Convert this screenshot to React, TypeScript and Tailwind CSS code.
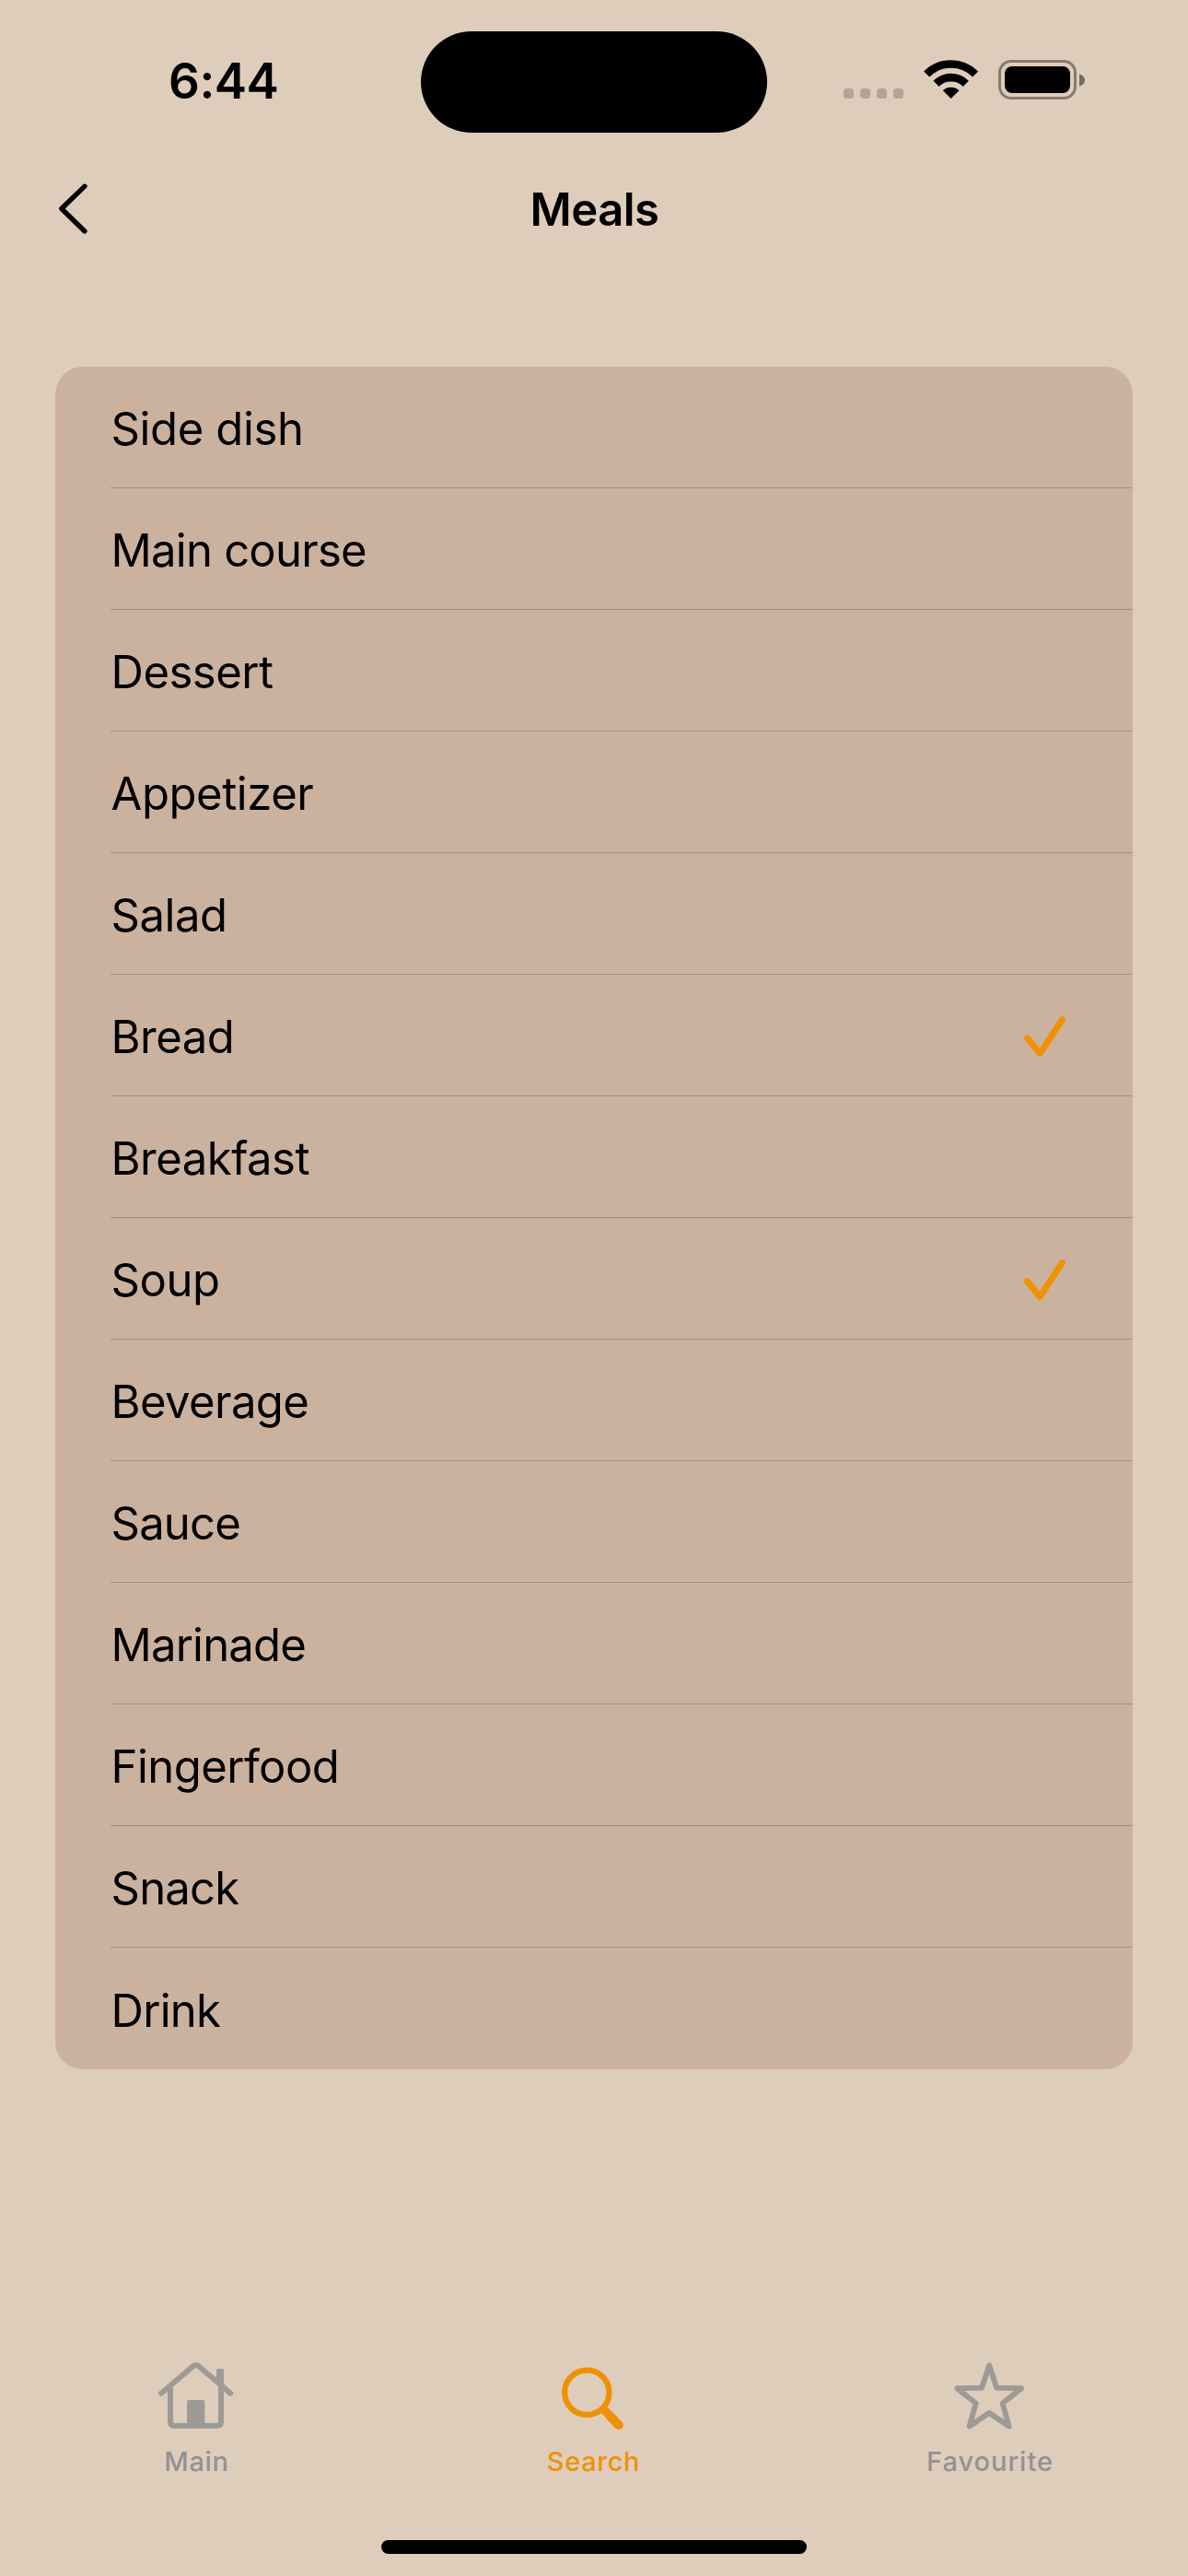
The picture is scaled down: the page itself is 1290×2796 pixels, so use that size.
import React from "react";

type Meal = { name: string; tracking: string; checked?: boolean };

const meals: Meal[] = [
  { name: "Side dish", tracking: "tracking-[-0.36px]" },
  { name: "Main course", tracking: "tracking-[-0.75px]" },
  { name: "Dessert", tracking: "tracking-[-0.48px]" },
  { name: "Appetizer", tracking: "tracking-[-0.42px]" },
  { name: "Salad", tracking: "tracking-[-0.45px]" },
  { name: "Bread", tracking: "tracking-[-0.53px]", checked: true },
  { name: "Breakfast", tracking: "tracking-[-0.5px]" },
  { name: "Soup", tracking: "tracking-[-0.43px]", checked: true },
  { name: "Beverage", tracking: "tracking-[-0.57px]" },
  { name: "Sauce", tracking: "tracking-[-0.8px]" },
  { name: "Marinade", tracking: "tracking-[-0.8px]" },
  { name: "Fingerfood", tracking: "tracking-[-0.53px]" },
  { name: "Snack", tracking: "tracking-[-0.8px]" },
  { name: "Drink", tracking: "tracking-[-0.7px]" },
];

function StatusBar() {
  return (
    <div className="flex h-[160px] shrink-0 items-start">
      <div className="mt-[58px] ml-[183px] w-[274px] text-[53px] leading-[60px] font-semibold tracking-[-0.5px]">
        6:44
      </div>
      <div className="mt-[34px] h-[110px] w-[376px] rounded-full bg-black" />
      <div className="mt-[96px] ml-[83px] flex gap-[7px]">
        {[0, 1, 2, 3].map((i) => (
          <span key={i} className="size-[11px] rounded-[3.5px] bg-[#b2a496]" />
        ))}
      </div>
      <svg className="mt-[64px] ml-[22px] h-[44px] w-[60px]" viewBox="369 102 180 132" fill="none">
        <path d="M378.5 151.5A112.5 112.5 0 0 1 537.5 151.5" stroke="#000" strokeWidth="26" />
        <path d="M409.6 182.6A68.5 68.5 0 0 1 506.4 182.6" stroke="#000" strokeWidth="26" />
        <path d="M458 231L431.5 204.5A39 39 0 0 1 484.5 204.5Z" fill="#000" />
      </svg>
      <div className="mt-[65px] ml-[21px] flex items-center gap-[3px]">
        <div className="h-[43px] w-[85px] rounded-[14px] border-[3px] border-[#867b71] p-1">
          <div className="h-full w-full rounded-[8px] bg-black" />
        </div>
        <svg className="h-[14px] w-[6px]" viewBox="0 0 6 14">
          <path d="M0 0.5C3.6 1.5 6 4 6 7S3.6 12.5 0 13.5Z" fill="#756b62" />
        </svg>
      </div>
    </div>
  );
}

function NavBar() {
  return (
    <header className="grid h-[132px] shrink-0 grid-cols-3 items-center">
      <svg className="ml-[60px] h-[60px] w-[40px]" viewBox="60 196 40 60" fill="none">
        <path
          d="M92 202.2L66.8 226.5L92 251"
          stroke="#000"
          strokeWidth="5.3"
          strokeLinecap="round"
          strokeLinejoin="round"
        />
      </svg>
      <h1 className="pt-[3px] pl-px text-center text-[49px] leading-[60px] font-semibold tracking-[-0.5px]">Meals</h1>
    </header>
  );
}

function CheckMark() {
  return (
    <svg className="mt-[3px] mr-[72px] h-[46px] w-[46px]" viewBox="1112 1102 46 46" fill="none">
      <path
        d="M1115.4 1126.7L1129.3 1143.4L1153.4 1106.7"
        stroke="#ee9204"
        strokeWidth="7"
        strokeLinecap="round"
        strokeLinejoin="round"
      />
    </svg>
  );
}

function MealList() {
  return (
    <ul className="mx-[60px] mt-[106px] shrink-0 overflow-hidden rounded-[30px] bg-[#cbb29e] pl-[60px]">
      {meals.map((meal, i) => (
        <li
          key={meal.name}
          className={
            i < meals.length - 1
              ? "flex h-[132px] items-center justify-between border-b border-[#a38f82]"
              : "flex h-[132px] items-center justify-between"
          }
        >
          <span className={`pt-[5px] pl-[0.5px] text-[49px] leading-[60px] ${meal.tracking}`}>{meal.name}</span>
          {meal.checked && <CheckMark />}
        </li>
      ))}
    </ul>
  );
}

function TabBar() {
  return (
    <nav className="mt-[316px] grid grid-cols-[426px_434px_430px] text-[29px] leading-[36px] font-medium text-[#929292]">
      <div className="flex flex-col items-center">
        <svg className="h-[76px] w-[84px]" viewBox="93 66 252 228" fill="none">
          <g stroke="#9e9b96" strokeWidth="18" strokeLinecap="round" strokeLinejoin="round">
            <path d="M105 173L210 84Q218 78 226 84L331 173" />
            <path d="M135 150V265Q135 279 149 279H286Q300 279 300 265V150" />
          </g>
          <path d="M285 138V98Q285 93 290 93H304Q309 93 309 98V160Z" fill="#9e9b96" />
          <path d="M189 275V201Q189 195 195 195H241Q247 195 247 201V275Z" fill="#9e9b96" />
        </svg>
        <span className="mt-[16px] pl-[1px] tracking-[0.7px]">Main</span>
      </div>
      <div className="flex flex-col items-center text-[#ee9204]">
        <svg className="h-[76px] w-[84px]" viewBox="93 66 252 228" fill="none" stroke="#ee9204">
          <circle cx="202" cy="170.5" r="72.5" strokeWidth="19" />
          <path d="M259 228L306 277" strokeWidth="28" />
          <path d="M280 250L306 277" strokeWidth="29" strokeLinecap="round" />
        </svg>
        <span className="mt-[16px] pl-[3px] tracking-[0.7px]">Search</span>
      </div>
      <div className="flex flex-col items-center">
        <svg className="h-[76px] w-[84px]" viewBox="159 66 252 228" fill="none">
          <path
            d="M282.5 82L307 155.500L387 157L326 205.500L347 280.500L282.500 237L218 280.500L239 205.500L178 157L258 155.500Z"
            stroke="#9e9b96"
            strokeWidth="18"
            strokeLinejoin="round"
          />
        </svg>
        <span className="mt-[16px] tracking-[1px]">Favourite</span>
      </div>
    </nav>
  );
}

export default function App() {
  return (
    <div className="flex h-[2796px] w-[1290px] flex-col overflow-hidden bg-[#dfcdbc] font-['Inter','Liberation_Sans',sans-serif] text-black">
      <StatusBar />
      <NavBar />
      <MealList />
      <TabBar />
      <div className="mx-auto mt-auto mb-[24px] h-[15px] w-[462px] rounded-full bg-black" />
    </div>
  );
}
